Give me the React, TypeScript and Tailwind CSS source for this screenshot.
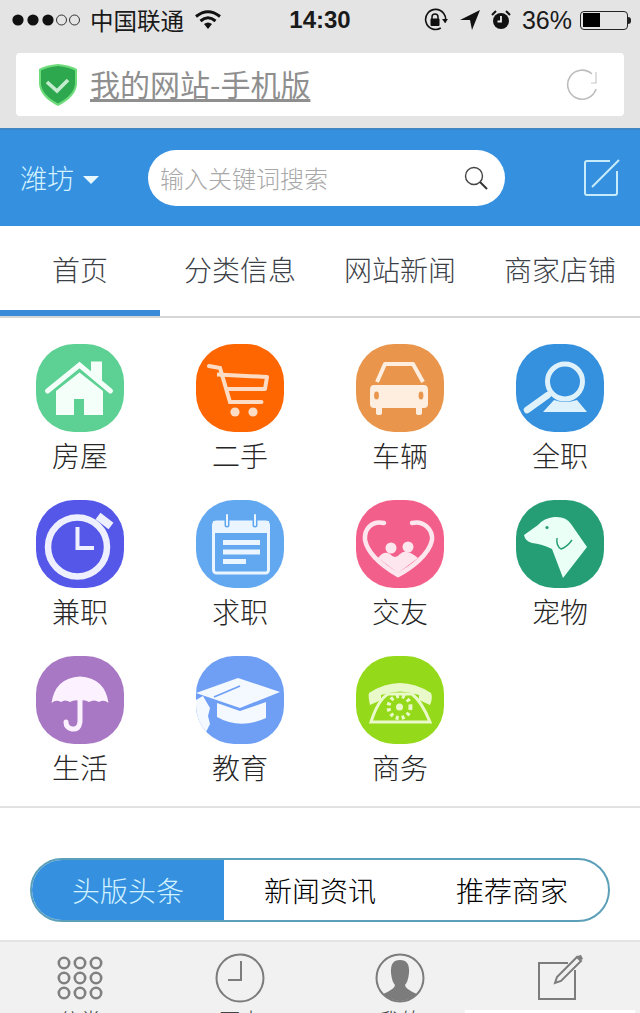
import React from 'react';

const Ic = ({ bg, children, tone }: { bg: string; tone: string; children: React.ReactNode }) => (
  <div className={`w-[88px] h-[88px] rounded-[38px] overflow-hidden ${bg}`}>
    <svg viewBox="0 0 88 88" width="88" height="88" color={tone}>{children}</svg>
  </div>
);

const House = () => (
  <Ic bg="bg-[#5dd193]" tone="#f3fff8">
    <path d="M20 47 L43.5 28.5 L67 47 V71 H48 V55 H38 V71 H20 Z" fill="currentColor" />
    <path d="M11.5 47 L43.5 21 L74.5 47" fill="none" stroke="currentColor" strokeWidth="5" strokeLinecap="round" />
    <path d="M55 17.5 H66 V37 L55 28 Z" fill="currentColor" />
  </Ic>
);
const Cart = () => (
  <Ic bg="bg-[#fd6600]" tone="#fcdcc4">
    <path d="M13 22 L24 24 L34 58 H65.5" fill="none" stroke="currentColor" strokeWidth="4" strokeLinecap="round" />
    <path d="M21 30.5 L71 33 L69 45 H30" fill="none" stroke="currentColor" strokeWidth="4" strokeLinejoin="round" />
    <circle cx="39" cy="68" r="4.6" fill="currentColor" />
    <circle cx="57" cy="68" r="4.6" fill="currentColor" />
  </Ic>
);
const Car = () => (
  <Ic bg="bg-[#e9964c]" tone="#fdeee0">
    <path d="M21 38 L29 20 H57 L67 38" fill="none" stroke="currentColor" strokeWidth="4" strokeLinejoin="round" />
    <path d="M18 41 H68 Q72 41 72 46 V60 Q72 64 68 64 H66 V69 Q66 71 63 71 Q60 71 60 69 V64 H26 V69 Q26 71 23 71 Q20 71 20 69 V64 H18 Q14 64 14 60 V46 Q14 41 18 41 Z" fill="currentColor" />
    <ellipse cx="20.5" cy="51.5" rx="2.4" ry="4" fill="#e9964c" />
    <ellipse cx="65" cy="51.5" rx="2.4" ry="4" fill="#e9964c" />
  </Ic>
);
const Search = () => (
  <Ic bg="bg-[#3591de]" tone="#dff1fb">
    <circle cx="49" cy="37.5" r="17.5" fill="none" stroke="currentColor" strokeWidth="5" />
    <path d="M11 66 L32 51" stroke="currentColor" strokeWidth="6.5" strokeLinecap="round" />
    <path d="M27 68 H71 L61 56 Q49 60 38 56 Z" fill="currentColor" />
  </Ic>
);
const Stopwatch = () => (
  <Ic bg="bg-[#5557e8]" tone="#eef0ff">
    <circle cx="41.5" cy="47" r="29.5" fill="none" stroke="currentColor" strokeWidth="6.5" />
    <path d="M41.5 27 V48 H58" fill="none" stroke="currentColor" strokeWidth="4" />
    <path d="M62 16 L75 26" stroke="currentColor" strokeWidth="8" />
  </Ic>
);
const Calendar = () => (
  <Ic bg="bg-[#62a8f0]" tone="#eaf5ff">
    <rect x="17.5" y="22" width="55" height="51" rx="3" fill="none" stroke="currentColor" strokeWidth="3" />
    <rect x="17" y="21" width="56" height="12" fill="currentColor" />
    <path d="M31 16 V25 M59 16 V25" stroke="#62a8f0" strokeWidth="5" strokeLinecap="round" />
    <path d="M31 15 V25 M59 15 V25" stroke="currentColor" strokeWidth="2" strokeLinecap="round" />
    <path d="M27 42.5 H64 M27 52 H64 M27 61.5 H50" stroke="currentColor" strokeWidth="5" />
  </Ic>
);
const Heart = () => (
  <Ic bg="bg-[#f25f8a]" tone="#fde6ee">
    <path d="M28 23 C15 20 8 30 9 40 C12 55 30 68 42 75 C55 68 73 55 76 40 C77 30 68 20 56 23" fill="none" stroke="currentColor" strokeWidth="4.5" strokeLinecap="round" />
    <path d="M22 58 Q28 50 34 54 Q39 60 44 54 Q50 48 62 58 L42 73 Z" fill="currentColor" />
    <circle cx="35" cy="48" r="5.5" fill="currentColor" />
    <circle cx="52" cy="47" r="5.5" fill="currentColor" />
  </Ic>
);
const Dog = () => (
  <Ic bg="bg-[#259e76]" tone="#eafff6">
    <path d="M8 35 L22 25 Q28 18 38 17 Q50 16 55 24 L71 47 L47 78 L36 49 Q26 44 16 43 Q9 41 8 35 Z" fill="currentColor" />
    <path d="M41 38 Q40 46 45 49 Q51 47 56 40" fill="none" stroke="#259e76" strokeWidth="1.4" />
    <circle cx="31" cy="27.5" r="1.6" fill="#259e76" />
  </Ic>
);
const Umbrella = () => (
  <Ic bg="bg-[#a878c4]" tone="#fbf1ff">
    <path d="M15.5 47 Q19 22 44 20.5 Q69 22 72.5 47 Q68 43 63 46 Q58 43 53 46 Q48 43 44 45 Q39 43 34 46 Q29 43 25 46 Q20 43 15.5 47 Z" fill="currentColor" />
    <path d="M44 42 V66 Q43 74 36 73 Q30 72 30 66" fill="none" stroke="currentColor" strokeWidth="5" strokeLinecap="round" />
  </Ic>
);
const Cap = () => (
  <Ic bg="bg-[#6e9ff5]" tone="#f4f8ff">
    <path d="M0 37 L42 22 L84 36 L44 52 Z" fill="currentColor" />
    <path d="M21 47 L44 55 L70 46 V62 Q44 74 21 61 Z" fill="currentColor" />
    <path d="M18 41 L44 30" stroke="#6e9ff5" strokeWidth="1.6" fill="none" />
    <path d="M7 40 L14 52 L12 60 L14 68 L8 80 L0 80 V44 Z" fill="currentColor" />
  </Ic>
);
const Phone = () => (
  <Ic bg="bg-[#95d91b]" tone="#eaf9c9">
    <path d="M14 49 Q12 40 13 37 Q44 17 75 37 Q77 42 74 49 L63 44 V39 Q44 32 25 39 V44 Z" fill="currentColor" />
    <path d="M15 66 Q22 44 32 38 H56 Q66 46 74 66 Z" fill="none" stroke="currentColor" strokeWidth="3" />
    <circle cx="43.5" cy="51" r="11" fill="none" stroke="currentColor" strokeWidth="4" strokeDasharray="3 3" />
    <circle cx="43.5" cy="51" r="3.5" fill="currentColor" />
  </Ic>
);

const cats: [string, React.ReactNode][] = [
  ['房屋', <House />], ['二手', <Cart />], ['车辆', <Car />], ['全职', <Search />],
  ['兼职', <Stopwatch />], ['求职', <Calendar />], ['交友', <Heart />], ['宠物', <Dog />],
  ['生活', <Umbrella />], ['教育', <Cap />], ['商务', <Phone />],
];

const Signal = () => (
  <svg width="70" height="14" viewBox="0 0 70 14" className="block">
    <circle cx="6" cy="7" r="5.6" fill="#111" />
    <circle cx="21" cy="7" r="5.6" fill="#111" />
    <circle cx="36" cy="7" r="5.6" fill="#111" />
    <circle cx="49.5" cy="7" r="5" fill="none" stroke="#333" strokeWidth="1" />
    <circle cx="62.5" cy="7" r="5" fill="none" stroke="#333" strokeWidth="1" />
  </svg>
);
const Wifi = () => (
  <svg width="26" height="20" viewBox="0 0 26 20" className="block">
    <path d="M1 6.5 Q13 -3 25 6.5" fill="none" stroke="#111" strokeWidth="3" />
    <path d="M5.5 11 Q13 4.5 20.5 11" fill="none" stroke="#111" strokeWidth="3" />
    <path d="M9 14 Q13 11 17 14 L13 19 Z" fill="#111" />
  </svg>
);
const RotLock = () => (
  <svg width="24" height="24" viewBox="0 0 24 24" className="block">
    <path d="M20 16 A10 10 0 1 1 21 9" fill="none" stroke="#111" strokeWidth="1.6" transform="rotate(30 11 12)" />
    <path d="M18 11 H24 L21 15 Z" fill="#111" />
    <rect x="6.5" y="10.5" width="9" height="7.5" rx="1" fill="#111" />
    <path d="M8 11 V9 A3 3 0 0 1 14 9 V11" fill="none" stroke="#111" strokeWidth="1.5" />
  </svg>
);
const Arrow = () => (
  <svg width="20" height="20" viewBox="0 0 20 20" className="block">
    <path d="M0 10 L20 0 L12 20 L10 10 Z" fill="#111" />
  </svg>
);
const Alarm = () => (
  <svg width="20" height="20" viewBox="0 0 20 20" className="block">
    <circle cx="10" cy="11" r="8" fill="#111" />
    <path d="M1 5 L5 1 M15 1 L19 5" stroke="#111" strokeWidth="2" />
    <path d="M10 6 V11.5 H6.5" fill="none" stroke="#eee" strokeWidth="1.8" />
  </svg>
);

const Shield = () => (
  <svg width="40" height="42" viewBox="0 0 40 42" className="block">
    <path d="M20 0 Q32 1 39 5 V20 Q38 33 20 42 Q2 33 1 20 V5 Q8 1 20 0 Z" fill="#6fdc7c" />
    <path d="M20 2 Q31 3 37 6.5 V20 Q36 31 20 39.5 Q4 31 3 20 V6.5 Q9 3 20 2 Z" fill="#2ea84f" />
    <path d="M9 18 L19 27 L30 16" fill="none" stroke="#c6ecd0" strokeWidth="3.6" />
  </svg>
);
const Reload = () => (
  <svg width="32" height="32" viewBox="0 0 32 32" className="block">
    <path d="M26 5 A14.5 14.5 0 1 0 30 20" fill="none" stroke="#bdbdbd" strokeWidth="1.6" />
    <path d="M30 3 V14 H25" fill="none" stroke="#c8c8c8" strokeWidth="1.2" />
  </svg>
);

const tabs = ['首页', '分类信息', '网站新闻', '商家店铺'];

export default function App() {
  return (
    <div className="relative w-[640px] h-[1013px] overflow-hidden bg-white flex flex-col font-['Noto_Sans_CJK_SC','Liberation_Sans',sans-serif]">
      {/* browser chrome */}
      <div className="h-[128px] shrink-0 bg-[#e4e4e4] flex flex-col">
        <div className="h-[40px] pl-[12px] pr-[9px] grid grid-cols-[1fr_auto_1fr] items-center text-[#1a1a1a]">
          <div className="flex items-center">
            <Signal />
            <span className="ml-[8px] text-[23.5px] leading-[40px]">中国联通</span>
            <span className="ml-[11px]"><Wifi /></span>
          </div>
          <span className="mr-[3px] text-[24px] leading-[40px] font-semibold font-['Liberation_Sans',sans-serif]">14:30</span>
          <div className="flex items-center justify-end">
            <RotLock />
            <span className="ml-[12px]"><Arrow /></span>
            <span className="ml-[11px]"><Alarm /></span>
            <span className="ml-[11px] text-[25px] leading-[40px] font-['Liberation_Sans',sans-serif]">36%</span>
            <div className="ml-[8px] flex items-center">
              <div className="w-[48px] h-[19px] rounded-[4px] border border-[#222] p-[1.5px] flex">
                <div className="w-[17px] bg-black" />
              </div>
              <div className="w-[3px] h-[7px] bg-[#222] rounded-r-sm" />
            </div>
          </div>
        </div>
        <div className="mx-[16px] mt-[13px] h-[63px] bg-white rounded-[4px] flex items-center pl-[22px] pr-[26px]">
          <Shield />
          <span className="ml-[12px] mb-[3px] text-[30px] leading-[40px] text-[#8f8f8f] underline underline-offset-[3px]">我的网站-手机版</span>
          <span className="ml-auto"><Reload /></span>
        </div>
      </div>

      {/* blue header */}
      <div className="h-[98px] shrink-0 bg-[#3590e0] border-t-[2px] border-[#3f86c4] flex items-center pl-[20px] pr-[20px]">
        <span className="text-[27px] leading-[40px] font-light text-[#d4f3ff]">潍坊</span>
        <span className="ml-[9px] mt-[3px] w-0 h-0 border-x-[8px] border-x-transparent border-t-[8px] border-t-[#e8f8ff]" />
        <div className="ml-[49px] w-[357px] h-[56px] rounded-full bg-white flex items-center pl-[12px] pr-[17px]">
          <span className="text-[24px] leading-[32px] font-light text-[#a8a8a8]">输入关键词搜索</span>
          <svg width="24" height="24" viewBox="0 0 24 24" className="ml-auto block">
            <circle cx="10" cy="10" r="8.5" fill="none" stroke="#444" strokeWidth="1.4" />
            <path d="M16 16 L23 23" stroke="#333" strokeWidth="2" />
          </svg>
        </div>
        <svg width="36" height="38" viewBox="0 0 36 38" className="ml-auto block">
          <path d="M26 2 H3 Q1 2 1 4 V34 Q1 36 3 36 H31 Q33 36 33 34 V12" fill="none" stroke="#c6ecfb" strokeWidth="2" />
          <path d="M8 28 L35 1" stroke="#c6ecfb" strokeWidth="2" />
        </svg>
      </div>

      {/* tabs */}
      <div className="h-[92px] shrink-0 grid grid-cols-4 border-b-[2px] border-[#d6d6d6]">
        {tabs.map((t, i) => (
          <div key={t} className={`flex items-center justify-center text-[28px] leading-[40px] font-light text-[#3c4148] ${i === 0 ? 'border-b-[6px] border-[#3a8bd8] pt-[1px]' : 'pb-[5px]'}`}>
            {t}
          </div>
        ))}
      </div>

      {/* categories */}
      <div className="shrink-0 grid grid-cols-4 gap-y-[18px] pt-[26px] pb-[12px] border-b-[2px] border-[#e2e2e2]">
        {cats.map(([label, icon]) => (
          <div key={label} className="flex flex-col items-center">
            {icon}
            <span className="h-[50px] text-[28px] leading-[46px] font-light text-[#262626]">{label}</span>
          </div>
        ))}
      </div>

      {/* segment */}
      <div className="shrink-0 mt-[50px] mx-[30px] h-[64px] rounded-full border-[2px] border-[#5b9fb8] overflow-hidden grid grid-cols-3 text-[28px] font-light">
        <div className="bg-[#3590e0] text-[#d2f2ff] flex items-center justify-center">头版头条</div>
        <div className="text-[#000] flex items-center justify-center">新闻资讯</div>
        <div className="text-[#000] flex items-center justify-center">推荐商家</div>
      </div>

      {/* bottom bar */}
      <div className="mt-[18px] flex-1 bg-[#f1f1f1] border-t-[2px] border-[#e4e4e4] grid grid-cols-4 overflow-hidden">
        {[
          ['分类',
            <svg width="52" height="52" viewBox="0 0 52 52" className="block">
              {[10, 26, 42].flatMap((x) => [11, 26, 41].map((y) => (
                <circle key={`${x}-${y}`} cx={x} cy={y} r="5.2" fill="none" stroke="#808080" strokeWidth="2.6" />
              )))}
            </svg>],
          ['历史',
            <svg width="52" height="52" viewBox="0 0 52 52" className="block">
              <circle cx="26" cy="26" r="23.5" fill="none" stroke="#7c7c7c" strokeWidth="2" />
              <path d="M27 9 V28 H14" fill="none" stroke="#7c7c7c" strokeWidth="2" />
            </svg>],
          ['我的',
            <svg width="52" height="52" viewBox="0 0 52 52" className="block">
              <circle cx="26" cy="26" r="23.5" fill="none" stroke="#7c7c7c" strokeWidth="2" />
              <path d="M26 8 Q36 8 35 21 Q34 30 31 33 Q31 37 43 42 Q36 49 26 49 Q16 49 9 42 Q21 37 21 33 Q18 30 17 21 Q16 8 26 8 Z" fill="#7c7c7c" />
            </svg>],
          ['发布',
            <svg width="52" height="52" viewBox="0 0 52 52" className="block">
              <path d="M34 11 H5 V47 H41 V18" fill="none" stroke="#7c7c7c" strokeWidth="2" />
              <path d="M21 31 L23 25 L43 5 L47 9 L27 29 Z" fill="#f1f1f1" stroke="#7c7c7c" strokeWidth="2" />
              <path d="M43 4 L47 3 L49 7 L47 8 Z" fill="#7c7c7c" />
            </svg>],
        ].map(([label, icon], i) => (
          <div key={i} className="flex flex-col items-center pt-[10px]">
            {icon}
            <span className="-mt-[1px] text-[22px] leading-[32px] font-light text-[#444]">{label}</span>
          </div>
        ))}
      </div>

      {/* watermark strip over the bottom edge */}
      <div className="absolute left-[465px] top-[1010px] w-[170px] h-[3px] bg-white" />
    </div>
  );
}
